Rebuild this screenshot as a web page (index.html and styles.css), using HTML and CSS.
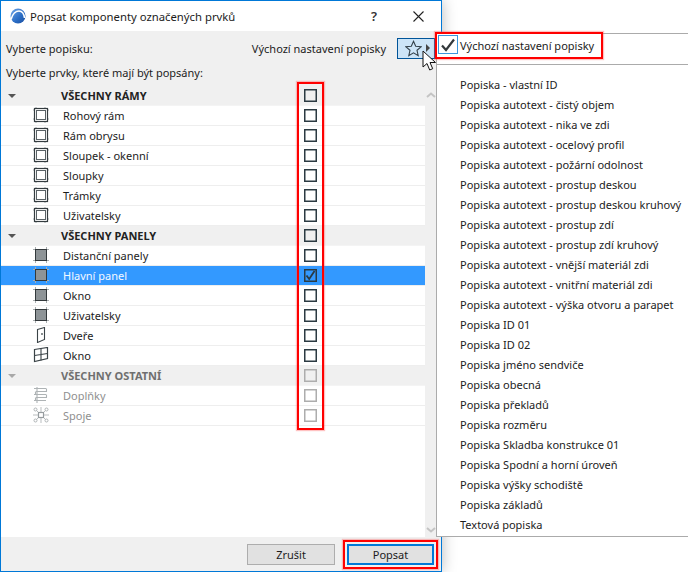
FILE: index.html
```html
<!DOCTYPE html>
<html lang="cs">
<head>
<meta charset="utf-8">
<title>Popsat komponenty označených prvků</title>
<link rel="stylesheet" href="styles.css">
</head>
<body>
<svg class="defs" width="0" height="0" aria-hidden="true">
  <defs>
    <linearGradient id="logo-fill" x1="0" y1="0" x2="1" y2="1">
      <stop offset="0" stop-color="#6fa6e8"/>
      <stop offset=".6" stop-color="#2a6cc4"/>
      <stop offset="1" stop-color="#1c4f9e"/>
    </linearGradient>
  </defs>
  <symbol id="i-frame" viewBox="0 0 16 16">
    <path d="M3 0v2M12 0v2M3 14v2M12 14v2M0 3h2M0 12h2M14 3h2M14 12h2" stroke="#a4a9ab" stroke-width="1" fill="none"/>
    <rect x="1.500" y="1.500" width="13" height="13" fill="#fff" stroke="#343c40" stroke-width="1.200"/>
    <rect x="3.500" y="3.500" width="9" height="9" fill="#fff" stroke="#5a6266" stroke-width="1"/>
  </symbol>
  <symbol id="i-panel" viewBox="0 0 16 16">
    <path d="M2.500 0v16M13.500 0v16M0 2.500h16M0 13.500h16" stroke="#a8adaf" stroke-width="1" fill="none"/>
    <rect x="2.500" y="2.500" width="11" height="11" fill="#8e9497" stroke="#33393c" stroke-width="1"/>
  </symbol>
  <symbol id="i-door" viewBox="0 0 16 16">
    <path d="M4.500 2.500 11.500 .5v12l-7 3z" fill="#fff" stroke="#3a4347" stroke-width="1.100"/>
    <path d="M9 6v2" stroke="#3a4347" stroke-width="1.200"/>
  </symbol>
  <symbol id="i-window" viewBox="0 0 16 16">
    <path d="M1.500 2.500 14.500 .5v11l-13 3z" fill="#fff" stroke="#3a4347" stroke-width="1.200"/>
    <path d="M8 1.500v12M1.500 8.500l13-2" stroke="#3a4347" stroke-width="1.100" fill="none"/>
  </symbol>
  <symbol id="i-addon" viewBox="0 0 16 16">
    <path d="M1 1.500h12M3 4.500h11M1 7.500h12M3 10.500h11M1 13.500h12M13.500 1.500v3M2.500 4.500v3M13.500 7.500v3M2.500 10.500v3M4 0v16" stroke="#aeb3b5" stroke-width="1.100" fill="none"/>
  </symbol>
  <symbol id="i-joint" viewBox="0 0 16 16">
    <path d="M3 3l3 3M13 3l-3 3M3 13l3-3M13 13l-3-3M0 8h5M11 8h5M8 0v5M8 11v5" stroke="#b9bdbf" stroke-width="1" fill="none"/>
    <circle cx="2.500" cy="2.500" r="1.500" fill="#fff" stroke="#aeb3b5"/>
    <circle cx="13.500" cy="2.500" r="1.500" fill="#fff" stroke="#aeb3b5"/>
    <circle cx="2.500" cy="13.500" r="1.500" fill="#fff" stroke="#aeb3b5"/>
    <circle cx="13.500" cy="13.500" r="1.500" fill="#fff" stroke="#aeb3b5"/>
    <rect x="5.500" y="5.500" width="5" height="5" fill="#fff" stroke="#969c9f" stroke-width="1.200"/>
  </symbol>
</svg>

<div class="window">
  <header class="titlebar">
    <svg class="logo" width="16" height="16" viewBox="0 0 16 16" aria-hidden="true">
      <circle cx="8" cy="8" r="7.500" fill="url(#logo-fill)"/>
      <path d="M1 11.500C2.500 6 6 3 9 3c3 0 5 3 5.500 7" fill="none" stroke="#fff" stroke-width="1.600"/>
    </svg>
    <span class="title">Popsat komponenty označených prvků</span>
    <span class="help">?</span>
    <svg class="close" width="11" height="11" viewBox="0 0 11 11" aria-hidden="true">
      <path d="M.5.500l10 10M10.500.500l-10 10" stroke="#222" stroke-width="1.100" fill="none"/>
    </svg>
  </header>

  <div class="content">
    <div class="picker">
      <span>Vyberte popisku:</span>
      <span class="current">Výchozí nastavení popisky</span>
      <span class="star-btn">
        <svg width="17" height="17" viewBox="0 0 17 17" aria-hidden="true">
          <path d="M8.500 1.300l2.200 4.900 5.300.6-4 3.500 1.200 5.300-4.700-2.800-4.700 2.800 1.200-5.300-4-3.500 5.300-.6z" fill="none" stroke="#33414a" stroke-width="1.100"/>
        </svg>
        <i class="tri-right"></i>
      </span>
    </div>
    <div class="prompt">Vyberte prvky, které mají být popsány:</div>

    <div class="list-wrap">
      <div class="list">
        <div class="row head"><i class="tri-down"></i><span></span><b>VŠECHNY RÁMY</b><span class="cb"></span></div>
        <div class="row"><span></span><svg class="ico"><use href="#i-frame"/></svg><span>Rohový rám</span><span class="cb"></span></div>
        <div class="row"><span></span><svg class="ico"><use href="#i-frame"/></svg><span>Rám obrysu</span><span class="cb"></span></div>
        <div class="row"><span></span><svg class="ico"><use href="#i-frame"/></svg><span>Sloupek - okenní</span><span class="cb"></span></div>
        <div class="row"><span></span><svg class="ico"><use href="#i-frame"/></svg><span>Sloupky</span><span class="cb"></span></div>
        <div class="row"><span></span><svg class="ico"><use href="#i-frame"/></svg><span>Trámky</span><span class="cb"></span></div>
        <div class="row"><span></span><svg class="ico"><use href="#i-frame"/></svg><span>Uživatelsky</span><span class="cb"></span></div>
        <div class="row head"><i class="tri-down"></i><span></span><b>VŠECHNY PANELY</b><span class="cb"></span></div>
        <div class="row"><span></span><svg class="ico"><use href="#i-panel"/></svg><span>Distanční panely</span><span class="cb"></span></div>
        <div class="row selected"><span></span><svg class="ico"><use href="#i-panel"/></svg><span>Hlavní panel</span>
          <span class="cb checked"><svg width="11" height="11" viewBox="0 0 11 11" aria-hidden="true"><path d="M1.500 5.500l2.700 3.500L9.500 1" fill="none" stroke="#2b3a42" stroke-width="1.800"/></svg></span></div>
        <div class="row"><span></span><svg class="ico"><use href="#i-panel"/></svg><span>Okno</span><span class="cb"></span></div>
        <div class="row"><span></span><svg class="ico"><use href="#i-panel"/></svg><span>Uživatelsky</span><span class="cb"></span></div>
        <div class="row"><span></span><svg class="ico"><use href="#i-door"/></svg><span>Dveře</span><span class="cb"></span></div>
        <div class="row"><span></span><svg class="ico"><use href="#i-window"/></svg><span>Okno</span><span class="cb"></span></div>
        <div class="row head disabled"><i class="tri-down"></i><span></span><b>VŠECHNY OSTATNÍ</b><span class="cb"></span></div>
        <div class="row disabled"><span></span><svg class="ico"><use href="#i-addon"/></svg><span>Doplňky</span><span class="cb"></span></div>
        <div class="row disabled"><span></span><svg class="ico"><use href="#i-joint"/></svg><span>Spoje</span><span class="cb"></span></div>
      </div>
      <div class="scrollbar">
        <svg width="10" height="6" viewBox="0 0 10 6" aria-hidden="true"><path d="M1 5l4-3.500L9 5" fill="none" stroke="#c4c4c4" stroke-width="2"/></svg>
        <svg width="10" height="6" viewBox="0 0 10 6" aria-hidden="true"><path d="M1 1l4 3.500L9 1" fill="none" stroke="#c4c4c4" stroke-width="2"/></svg>
      </div>
    </div>
  </div>

  <footer class="footer">
    <button class="btn" type="button">Zrušit</button>
    <button class="btn primary" type="button">Popsat</button>
  </footer>
</div>

<div class="menu">
  <div class="menu-top">
    <span class="menu-check"><svg width="16" height="14" viewBox="0 0 16 14" aria-hidden="true"><path d="M2 7.500l4 4.500L14 1.500" fill="none" stroke="#33393c" stroke-width="2.200"/></svg></span>
    <span>Výchozí nastavení popisky</span>
  </div>
  <ul class="menu-items">
    <li>Popiska - vlastní ID</li>
    <li>Popiska autotext - čistý objem</li>
    <li>Popiska autotext - nika ve zdi</li>
    <li>Popiska autotext - ocelový profil</li>
    <li>Popiska autotext - požární odolnost</li>
    <li>Popiska autotext - prostup deskou</li>
    <li>Popiska autotext - prostup deskou kruhový</li>
    <li>Popiska autotext - prostup zdí</li>
    <li>Popiska autotext - prostup zdí kruhový</li>
    <li>Popiska autotext - vnější materiál zdi</li>
    <li>Popiska autotext - vnitřní materiál zdi</li>
    <li>Popiska autotext - výška otvoru a parapet</li>
    <li>Popiska ID 01</li>
    <li>Popiska ID 02</li>
    <li>Popiska jméno sendviče</li>
    <li>Popiska obecná</li>
    <li>Popiska překladů</li>
    <li>Popiska rozměru</li>
    <li>Popiska Skladba konstrukce 01</li>
    <li>Popiska Spodní a horní úroveň</li>
    <li>Popiska výšky schodiště</li>
    <li>Popiska základů</li>
    <li>Textová popiska</li>
  </ul>
</div>

<div class="mark mark-column"></div>
<div class="mark mark-menu"></div>
<div class="mark mark-button"></div>

<svg class="cursor" width="15" height="22" viewBox="0 0 15 22" aria-hidden="true">
  <path d="M1 1v16l4-3.500 2.700 6.500 3-1.300L8 12.500h5.500z" fill="#fff" stroke="#111" stroke-width="1"/>
</svg>
</body>
</html>
```
FILE: styles.css
```css
* { box-sizing: border-box; }

html, body {
  margin: 0;
  height: 572px;
  overflow: hidden;
  background: #fff;
}

body {
  position: relative;
  font-family: "Noto Sans", "Open Sans", sans-serif;
  font-size: 11px;
  color: #1c1c1c;
}

.defs { position: absolute; }

.window {
  width: 442px;
  height: 572px;
  display: flex;
  flex-direction: column;
  border: 1px solid #0078d7;
  background: #f0f0f0;
  box-shadow: 0 0 14px rgba(0, 0, 0, .28);
}

.titlebar {
  height: 30px;
  flex: none;
  display: flex;
  align-items: center;
  background: #fff;
  padding-left: 9px;
}

.logo { flex: none; }

.title {
  margin-left: 4px;
  font-size: 11.3px;
  width: 341px;
  flex: none;
}

.help {
  font-size: 13px;
  font-weight: 600;
  width: 42px;
  flex: none;
  color: #333;
}

.close { flex: none; }

.content {
  flex: 1;
  display: flex;
  flex-direction: column;
}

.picker {
  height: 29px;
  padding: 5px 0 0 5px;
  display: flex;
  align-items: center;
}

.current { margin-left: auto; margin-right: 11px; }

.star-btn {
  width: 38px;
  height: 21px;
  margin-right: 6px;
  display: flex;
  align-items: center;
  padding-left: 7px;
  gap: 4px;
  background: #cce4f7;
  border: 1px solid #005499;
}

.tri-right {
  width: 0;
  height: 0;
  border-left: 4px solid #444;
  border-top: 4px solid transparent;
  border-bottom: 4px solid transparent;
}

.prompt {
  height: 26px;
  padding: 5px 0 0 5px;
  line-height: 15px;
}

.list-wrap {
  flex: 1;
  display: flex;
  position: relative;
}

.list {
  width: 424px;
  background: #fff;
}

.row {
  height: 20px;
  display: grid;
  grid-template-columns: 32px 30px 241px 13px;
  align-items: center;
  border-bottom: 1px solid #eee;
  background: #fff;
  line-height: 15px;
}

.ico { width: 16px; height: 16px; margin-bottom: 1px; }

.head {
  grid-template-columns: 32px 28px 243px 13px;
  background: #f0f0f0;
  border-bottom-color: #f4f4f4;
}

.head b { font-weight: 700; color: #222; }

.selected { background: #3399ff; color: #f3f8ff; }

.disabled { color: #8f8f8f; }
.head.disabled b { color: #6f6f6f; }

.tri-down {
  width: 0;
  height: 0;
  margin-left: 7px;
  border-top: 4px solid #555;
  border-left: 4px solid transparent;
  border-right: 4px solid transparent;
}

.disabled .tri-down { border-top-color: #a8a8a8; }

.cb {
  width: 13px;
  height: 13px;
  border: 1px solid #2b3a42;
  box-shadow: inset 0 0 0 .5px #2b3a42;
  display: flex;
  align-items: center;
  justify-content: center;
}

.checked { background: transparent; }

.disabled .cb {
  border-color: #adadad;
  box-shadow: inset 0 0 0 .5px #adadad;
}

.scrollbar {
  width: 12px;
  background: #f0f0f0;
  display: flex;
  flex-direction: column;
  justify-content: space-between;
  align-items: center;
  padding: 6px 0 4px;
}

.footer {
  height: 34px;
  flex: none;
  display: flex;
  align-items: flex-start;
  padding: 7px 0 0 246px;
  gap: 12px;
}

.btn {
  width: 88px;
  height: 21px;
  padding: 0;
  font: inherit;
  color: #1c1c1c;
  background: #e1e1e1;
  border: 1px solid #adadad;
}

.primary {
  width: 87px;
  border: 2px solid #0078d7;
}

.menu {
  position: absolute;
  left: 436px;
  top: 33px;
  width: 252px;
  height: 504px;
  background: #fff;
  border: 1px solid #ababab;
  border-right: 0;
}

.menu-top {
  height: 31px;
  display: flex;
  align-items: flex-start;
  padding: 1px 0 0 1px;
  border-bottom: 1px solid #ababab;
  line-height: 21px;
}

.menu-check {
  width: 20px;
  height: 19px;
  margin-right: 2px;
  display: flex;
  align-items: center;
  justify-content: center;
  border: 1px solid #3a96dd;
  background: #fff;
}

.menu-items {
  margin: 0;
  padding: 10px 0 0 23px;
  list-style: none;
}

.menu-items li {
  height: 20px;
  line-height: 20px;
}

.mark {
  position: absolute;
  border: 2px solid #f00;
  box-shadow: 0 0 1px 1px rgba(255, 80, 80, .35);
}

.mark-column { left: 297px; top: 82px; width: 27px; height: 348px; }
.mark-menu { left: 435px; top: 32px; width: 168px; height: 27px; }
.mark-button { left: 343px; top: 540px; width: 95px; height: 29px; }

.cursor {
  position: absolute;
  left: 422px;
  top: 50px;
}
```
